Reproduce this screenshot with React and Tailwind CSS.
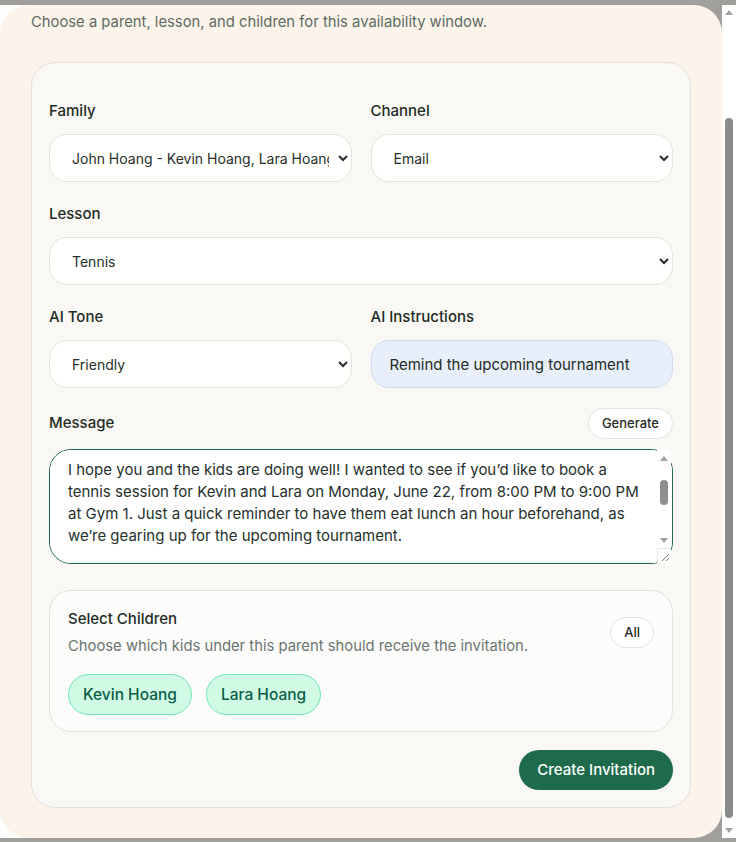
import { useEffect, useRef } from 'react'

const message = `Hi John,

I hope you and the kids are doing well! I wanted to see if you’d like to book a tennis session for Kevin and Lara on Monday, June 22, from 8:00 PM to 9:00 PM at Gym 1. Just a quick reminder to have them eat lunch an hour beforehand, as we’re gearing up for the upcoming tournament.

Let me know if that time works for everyone and I’ll get it on the calendar.

See you on the court,
Coach Maya`

const children = ['Kevin Hoang', 'Lara Hoang']

function Arrow({ down }) {
  return (
    <svg width="8" height="5" viewBox="0 0 8 5" className="mx-auto">
      <path d={down ? 'M0 0h8L4 5z' : 'M0 5h8L4 0z'} fill="#a3a3a3" />
    </svg>
  )
}

function Field({ label, children }) {
  return (
    <div className="flex flex-col">
      <label className="text-[15px] font-medium leading-5 text-[#1f2b25] mb-[13px]">{label}</label>
      {children}
    </div>
  )
}

function Select({ value, options }) {
  return (
    <select
      defaultValue={value}
      className="h-12 w-full rounded-[18px] border border-[#e6e3de] bg-[#fffffd] pl-[18px] pr-[6px] text-[14px] text-[#26302b] outline-none"
    >
      {options.map((o) => (
        <option key={o}>{o}</option>
      ))}
    </select>
  )
}

export default function App() {
  const modalRef = useRef(null)
  const textRef = useRef(null)

  useEffect(() => {
    if (textRef.current) textRef.current.scrollTop = 45
    if (modalRef.current) modalRef.current.scrollTop = modalRef.current.scrollHeight
  }, [])

  return (
    <div className="h-[842px] bg-[#a19f9b] pt-[5px] font-['Inter',sans-serif]">
      <div className="flex h-[833px]">
        <div ref={modalRef} className="h-full flex-1 overflow-y-scroll rounded-[28px] bg-[#fcf4eb]">
          {/* top of the dialog is scrolled out of view */}
          <div className="px-[31px] pt-[121px] pb-[30px]">
            <p className="text-[14.8px] leading-[22px] text-[#5d6b62]">
              Choose a parent, lesson, and children for this availability window.
            </p>

            <div className="mt-[29px] rounded-[24px] border border-[#e3e1dc] bg-[#faf8f4] px-[17px] pt-[38px] pb-[17px]">
              <div className="grid grid-cols-2 gap-x-[19px] gap-y-[22px]">
                <Field label="Family">
                  <Select value="John Hoang - Kevin Hoang, Lara Hoang" options={['John Hoang - Kevin Hoang, Lara Hoang']} />
                </Field>
                <Field label="Channel">
                  <Select value="Email" options={['Email', 'SMS']} />
                </Field>
                <div className="col-span-2">
                  <Field label="Lesson">
                    <Select value="Tennis" options={['Tennis', 'Swimming']} />
                  </Field>
                </div>
                <Field label="AI Tone">
                  <Select value="Friendly" options={['Friendly', 'Formal']} />
                </Field>
                <Field label="AI Instructions">
                  <input
                    defaultValue="Remind the upcoming tournament"
                    className="h-12 w-full rounded-[18px] border border-[#cfdaec] bg-[#e8effb] px-[18px] text-[15px] text-[#1f2b25] outline-none"
                  />
                </Field>
              </div>

              <div className="mt-[20px] flex items-center justify-between">
                <span className="text-[15px] font-medium text-[#1f2b25]">Message</span>
                <button className="h-[31px] rounded-full border border-[#e5e3df] bg-white px-[13px] text-[13px] font-medium text-[#1f2b25]">
                  Generate
                </button>
              </div>
              <div className="relative mt-[10px]">
                <textarea
                  ref={textRef}
                  defaultValue={message}
                  className="block h-[115px] w-full resize-none rounded-[22px] border border-[#1e6b4a] bg-white pl-[18px] pr-[30px] py-[10px] text-[15px] leading-[22px] text-[#26302b] outline-none"
                />
                {/* textarea scrollbar */}
                <div className="absolute right-[2px] top-[1px] bottom-[16px] flex w-[14px] flex-col bg-white">
                  <div className="flex h-[16px] items-center"><Arrow /></div>
                  <div className="flex-1 px-[3px] pt-[14px] pb-[27px]">
                    <div className="h-full rounded-full bg-[#8f8f8f]" />
                  </div>
                  <div className="flex h-[16px] items-center"><Arrow down /></div>
                </div>
                <div className="absolute right-[2px] bottom-[1px] flex h-[15px] w-[14px] items-end justify-end border-l border-t border-[#e6e6e6] bg-white p-[2px]">
                  <svg width="8" height="8" viewBox="0 0 8 8">
                    <path d="M8 1L1 8M8 5L5 8" stroke="#777" strokeWidth="1" />
                  </svg>
                </div>
              </div>

              <div className="mt-[26px] rounded-[22px] border border-[#e3e1dd] bg-[#fcfcfb] px-[18px] pt-[18px] pb-[16px]">
                <div className="flex items-center justify-between">
                  <div>
                    <h3 className="text-[15px] font-medium leading-5 text-[#1f2b25]">Select Children</h3>
                    <p className="mt-[7px] text-[14.8px] leading-5 text-[#6b756f]">
                      Choose which kids under this parent should receive the invitation.
                    </p>
                  </div>
                  <button className="h-[31px] rounded-full border border-[#e5e3df] bg-white px-[13px] text-[13px] font-medium text-[#1f2b25]">
                    All
                  </button>
                </div>
                <div className="mt-[18px] flex gap-[14px]">
                  {children.map((c) => (
                    <button
                      key={c}
                      className="h-[41px] rounded-full border border-[#6ee7b7] bg-[#d1fae5] px-[14px] text-[15.5px] font-medium text-[#065f46]"
                    >
                      {c}
                    </button>
                  ))}
                </div>
              </div>

              <div className="mt-[18px] flex justify-end">
                <button className="h-10 rounded-full bg-[#1d6b4b] px-[18px] text-[15px] font-medium text-white">
                  Create Invitation
                </button>
              </div>
            </div>
          </div>
        </div>

        {/* page scrollbar */}
        <div className="flex w-[14px] flex-col bg-white">
          <div className="flex h-[15px] items-center"><Arrow /></div>
          <div className="flex-1 px-[3px] pt-[98px] pb-[5px]">
            <div className="h-full rounded-full bg-[#8c8c8c]" />
          </div>
          <div className="flex h-[15px] items-center"><Arrow down /></div>
        </div>
      </div>
    </div>
  )
}
